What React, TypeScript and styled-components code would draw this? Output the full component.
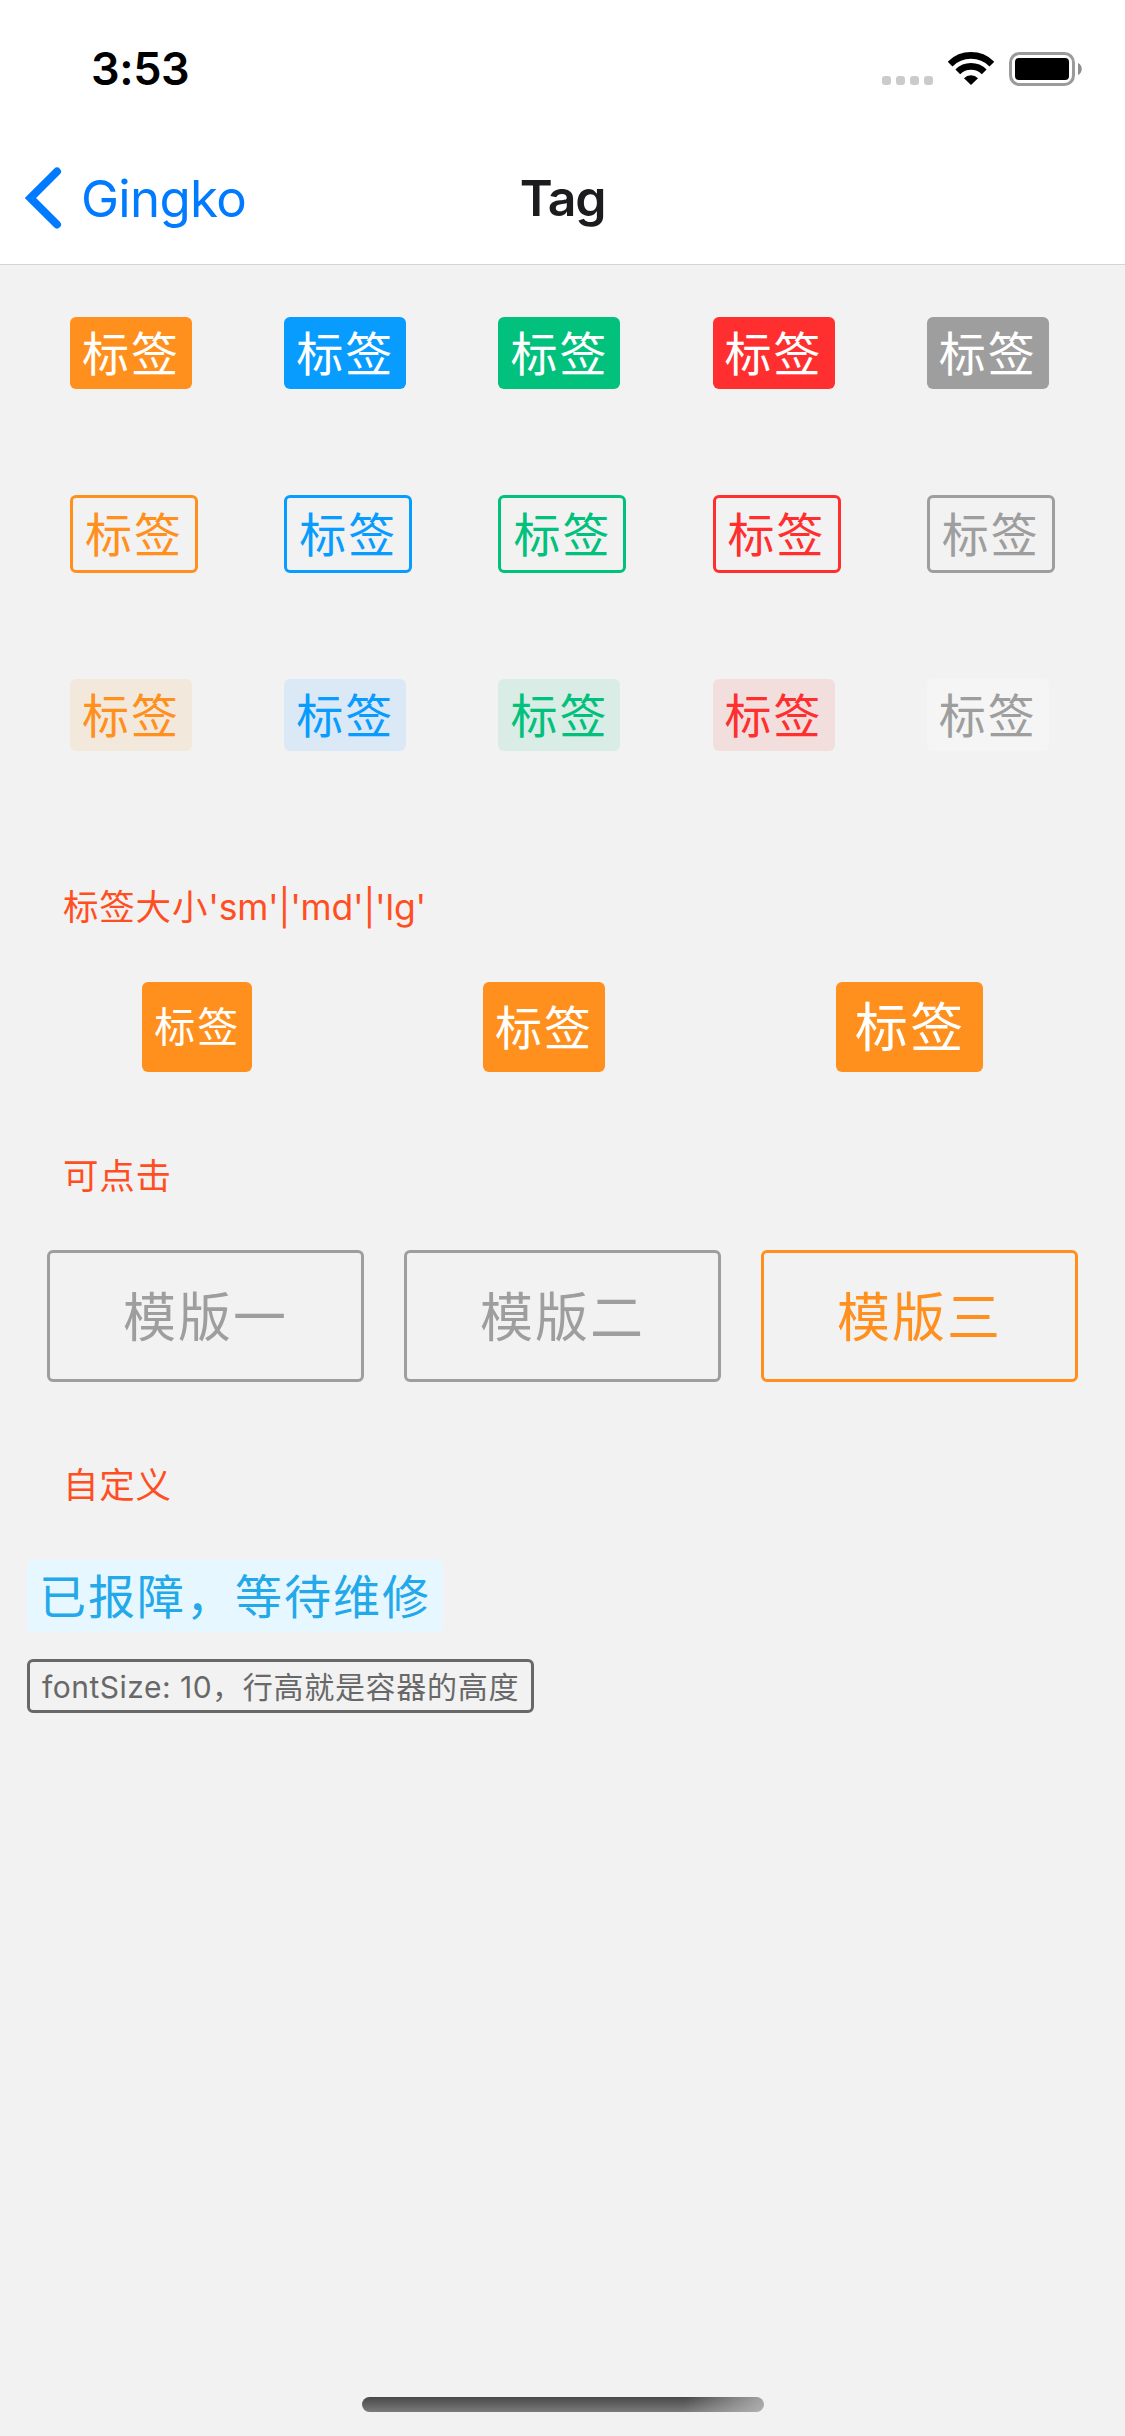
import React, { useState } from 'react';
import styled, { createGlobalStyle, css } from 'styled-components';

const GlobalStyle = createGlobalStyle`
  * { box-sizing: border-box; }
  body {
    margin: 0;
    background: #f2f2f2;
    font-family: Inter, "Noto Sans CJK SC", sans-serif;
  }
`;

const Screen = styled.div`
  display: flex;
  flex-direction: column;
  width: 1125px;
  height: 2436px;
  overflow: hidden;
  background: #f2f2f2;
`;

const Header = styled.header`
  height: 265px;
  background: #fff;
  border-bottom: 1px solid #d4d4d5;
`;

const StatusBar = styled.div`
  display: flex;
  justify-content: space-between;
  height: 132px;
  padding: 45px 43px 0 91px;
`;

const Clock = styled.span`
  font-size: 45px;
  line-height: 48px;
  font-weight: 600;
  letter-spacing: -0.4px;
  color: #000;
`;

const StatusIcons = styled.div`
  display: flex;
  align-items: flex-start;
  padding-top: 7px;
`;

const SignalDots = styled.div`
  display: flex;
  gap: 5px;
  padding: 24px 15px 0 0;
`;

const Dot = styled.i`
  width: 9px;
  height: 9px;
  border-radius: 3px;
  background: #cbcbcb;
`;

const WifiSvg = styled.svg`
  display: block;
  margin-right: 15px;
`;

const NavBar = styled.nav`
  display: grid;
  grid-template-columns: 1fr auto 1fr;
  align-items: center;
  height: 132px;
`;

const BackButton = styled.button`
  display: flex;
  align-items: center;
  gap: 19px;
  padding: 0 0 0 25px;
  border: 0;
  background: none;
  color: #007aff;
  font: 400 51px/60px Inter, sans-serif;
  letter-spacing: -0.7px;
`;

const BackLabel = styled.span`
  padding-top: 2px;
`;

const NavTitle = styled.h1`
  margin: 0;
  font-size: 50px;
  line-height: 60px;
  font-weight: 600;
  letter-spacing: -1.2px;
  color: #1c1c1e;
`;

const Content = styled.main`
  display: flex;
  flex-direction: column;
  flex: 1;
  padding-top: 52px;
`;

const TagGrid = styled.div`
  display: grid;
  grid-template-columns: repeat(5, 1fr);
  row-gap: 106px;
  padding: 0 27px;
`;

const TagCell = styled.div`
  display: flex;
  padding-left: 43px;
`;

type Variant = 'solid' | 'outline' | 'soft';
type Size = 'sm' | 'md' | 'lg';

const sizes = {
  sm: css`font-size: 41px; letter-spacing: 2px; padding: 1px 12px 0;`,
  md: css`font-size: 47px; letter-spacing: 2px; padding: 1px 12px 0;`,
  lg: css`font-size: 53px; letter-spacing: 2.5px; padding: 2px 17px 0 19px;`,
};

const Tag = styled.span<{
  $variant?: Variant;
  $size?: Size;
  $color: string;
  $tint?: string;
  $height?: number;
}>`
  display: flex;
  align-items: center;
  justify-content: center;
  height: ${p => p.$height ?? (p.$variant === 'outline' ? 78 : 72)}px;
  border-radius: 6px;
  line-height: 1;
  white-space: nowrap;
  ${p => sizes[p.$size ?? 'md']}
  ${p => p.$variant === 'outline'
    ? css`border: 3px solid ${p.$color}; color: ${p.$color};`
    : p.$variant === 'soft'
      ? css`background: ${p.$tint}; color: ${p.$color};`
      : css`background: ${p.$color}; color: #fff;`}
`;

const SectionTitle = styled.h2<{ $top: number }>`
  margin: ${p => p.$top}px 0 0 63px;
  padding-top: 2px;
  font-size: 35.5px;
  line-height: 48px;
  font-weight: 400;
  letter-spacing: 0.8px;
  color: #ff4f22;
`;

const Latin = styled.span`
  letter-spacing: -0.2px;
`;

const SizeRow = styled.div`
  display: flex;
  justify-content: space-around;
  margin-top: 50px;
  padding: 0 27px;
`;

const ChoiceRow = styled.div`
  display: grid;
  grid-template-columns: repeat(3, 1fr);
  gap: 40px;
  margin-top: 49px;
  padding: 0 47px;
`;

const Choice = styled.button<{ $active: boolean }>`
  height: 132px;
  padding: 4px 0 0;
  border: 3px solid ${p => (p.$active ? '#ff901e' : '#9e9e9e')};
  border-radius: 6px;
  background: none;
  color: ${p => (p.$active ? '#ff901e' : '#9e9e9e')};
  font: 400 53px/78px Inter, "Noto Sans CJK SC", sans-serif;
  letter-spacing: 2px;
`;

const CustomList = styled.div`
  display: flex;
  flex-direction: column;
  align-items: flex-start;
  gap: 27px;
  margin-top: 50px;
  padding-left: 27px;
`;

const SmallTag = styled(Tag)`
  padding: 1px 12px 0;
  font-size: 30px;
  letter-spacing: 0.7px;
`;

const SmallLatin = styled.span`
  white-space: pre;
  letter-spacing: 0.5px;
`;

const HomeIndicator = styled.div`
  width: 402px;
  height: 15px;
  margin: auto auto 24px 362px;
  border-radius: 8px;
  background:
    linear-gradient(100deg, transparent 80%, rgba(190, 190, 190, 0.8) 100%),
    linear-gradient(#484848, #7b7b7b);
`;

const Wifi = () => (
  <WifiSvg width="46" height="34" viewBox="0 0 46 34">
    <g fill="none" stroke="#000" strokeWidth="6.7">
      <path d="M2.1 12.1A29.6 29.6 0 0 1 43.9 12.1" />
      <path d="M9.8 19.8A18.7 18.7 0 0 1 36.2 19.8" />
    </g>
    <path d="M23 33L16 26.2A9.9 9.9 0 0 1 30 26.2Z" />
  </WifiSvg>
);

const Battery = () => (
  <svg width="73" height="34" viewBox="0 0 73 34">
    <rect x="1.5" y="1.5" width="63" height="31" rx="9" fill="none" stroke="#9b9b9b" strokeWidth="3" />
    <rect x="6" y="6" width="54" height="22" rx="4" />
    <path d="M69 11C74 13 74 21 69 23Z" fill="#8e8e8e" />
  </svg>
);

const Chevron = () => (
  <svg width="37" height="62" viewBox="0 0 37 62">
    <path d="M32 4.5L5.5 31L32 57.5" fill="none" stroke="#007aff" strokeWidth="8" strokeLinecap="round" strokeLinejoin="miter" />
  </svg>
);

const palette = [
  { color: '#ff901e', tint: '#f3e8dc' },
  { color: '#099cff', tint: '#dae9f5' },
  { color: '#02c17c', tint: '#d9ece5' },
  { color: '#ff2f2f', tint: '#f3dede' },
  { color: '#9e9e9e', tint: '#f5f5f5' },
];
const variants: Variant[] = ['solid', 'outline', 'soft'];
const tagSizes: Size[] = ['sm', 'md', 'lg'];
const templates = ['模版一', '模版二', '模版三'];

export default function App() {
  const [selected, setSelected] = useState(2);
  return (
    <Screen>
      <GlobalStyle />
      <Header>
        <StatusBar>
          <Clock>3:53</Clock>
          <StatusIcons>
            <SignalDots><Dot /><Dot /><Dot /><Dot /></SignalDots>
            <Wifi />
            <Battery />
          </StatusIcons>
        </StatusBar>
        <NavBar>
          <BackButton><Chevron /><BackLabel>Gingko</BackLabel></BackButton>
          <NavTitle>Tag</NavTitle>
        </NavBar>
      </Header>
      <Content>
        <TagGrid>
          {variants.map(variant => palette.map(({ color, tint }) => (
            <TagCell key={variant + color}>
              <Tag $variant={variant} $color={color} $tint={tint}>标签</Tag>
            </TagCell>
          )))}
        </TagGrid>
        <SectionTitle $top={131}>标签大小<Latin>'sm'|'md'|'lg'</Latin></SectionTitle>
        <SizeRow>
          {tagSizes.map(size => (
            <Tag key={size} $size={size} $color="#ff901e" $height={90}>标签</Tag>
          ))}
        </SizeRow>
        <SectionTitle $top={79}>可点击</SectionTitle>
        <ChoiceRow>
          {templates.map((name, i) => (
            <Choice key={name} $active={i === selected} onClick={() => setSelected(i)}>{name}</Choice>
          ))}
        </ChoiceRow>
        <SectionTitle $top={78}>自定义</SectionTitle>
        <CustomList>
          <Tag $variant="soft" $color="#23a9ea" $tint="#e6f7ff">已报障，等待维修</Tag>
          <SmallTag $variant="outline" $color="#686868" $height={54}>
            <SmallLatin>fontSize: 10</SmallLatin>，行高就是容器的高度
          </SmallTag>
        </CustomList>
        <HomeIndicator />
      </Content>
    </Screen>
  );
}
